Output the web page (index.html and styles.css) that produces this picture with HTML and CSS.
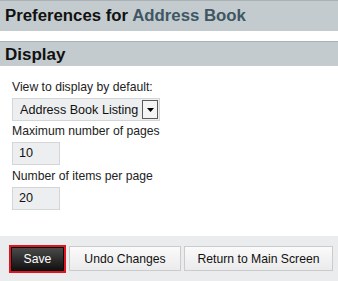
FILE: index.html
```html
<!DOCTYPE html>
<html lang="en">
<head>
    <meta charset="UTF-8">
    <title>Preferences for Address Book</title>
    <link rel="stylesheet" href="styles.css">
</head>
<body>
    <div class="page-title">
        <h1>Preferences for <span class="app-name">Address Book</span></h1>
    </div>

    <div class="section">
        <h2 class="section__title">Display</h2>
        <div class="section__body">
            <label class="field-label">View to display by default:</label>
            <div class="select">
                <span class="select__value">Address Book Listing</span>
                <span class="select__arrow">
                    <svg width="7" height="4" viewBox="0 0 7 4"><polygon points="0,0 7,0 3.5,4" fill="#000"/></svg>
                </span>
            </div>
            <label class="field-label">Maximum number of pages</label>
            <div class="text-input">10</div>
            <label class="field-label">Number of items per page</label>
            <div class="text-input">20</div>
        </div>
    </div>

    <div class="actions">
        <div class="btn-focus">
            <button class="btn btn--primary">Save</button>
        </div>
        <button class="btn btn--undo">Undo Changes</button>
        <button class="btn btn--return">Return to Main Screen</button>
    </div>
</body>
</html>
```

FILE: styles.css
```css
body {
    margin: 0;
    padding: 0;
    width: 338px;
    height: 281px;
    overflow: hidden;
    background: #fff;
    font-family: "Liberation Sans", Arial, sans-serif;
    color: #222;
    display: flex;
    flex-direction: column;
}

.page-title {
    height: 30px;
    border-top: 1px solid #a9b1b4;
    background: #c3cbce;
    padding-left: 5px;
    display: flex;
    align-items: center;
    flex-shrink: 0;
}

.page-title h1 {
    margin: 0;
    font-size: 16.8px;
    font-weight: bold;
    color: #111;
}

.app-name {
    color: #3f5663;
}

.section {
    margin-top: 10px;
    flex: 1;
}

.section__title {
    margin: 0;
    height: 24px;
    border-top: 1px solid #a9b1b4;
    background: #c3cbce;
    padding-left: 5px;
    font-size: 17px;
    font-weight: bold;
    color: #111;
    line-height: 26px;
}

.section__body {
    padding: 14px 12px 0;
    display: flex;
    flex-direction: column;
    align-items: flex-start;
}

.field-label {
    font-size: 12.2px;
    color: #222;
    line-height: 15px;
    margin-bottom: 3px;
}

.select {
    width: 146px;
    height: 21px;
    border: 1px solid #d3d6d7;
    background: #eceeef;
    display: flex;
    align-items: center;
    justify-content: space-between;
    margin-bottom: 3px;
}

.select__value {
    font-size: 12.6px;
    padding-left: 7px;
    color: #111;
    white-space: nowrap;
}

.select__arrow {
    width: 14px;
    height: 17px;
    border: 1px solid #5a5a5a;
    background: #f4f4f4;
    margin-right: 1px;
    display: flex;
    align-items: center;
    justify-content: center;
    flex-shrink: 0;
}

.text-input {
    width: 40px;
    height: 21px;
    border: 1px solid #d3d6d7;
    background: #eceeef;
    font-size: 12.6px;
    line-height: 21px;
    padding-left: 6px;
    margin-bottom: 4px;
    color: #111;
}

.actions {
    height: 45px;
    background: #eaeced;
    display: flex;
    align-items: center;
    padding-left: 9px;
    gap: 3px;
    flex-shrink: 0;
}

.btn {
    height: 25px;
    border: 1px solid #c9cbcc;
    background: linear-gradient(#fafafa, #ebebeb);
    font-family: "Liberation Sans", Arial, sans-serif;
    font-size: 12.2px;
    color: #111;
    padding: 0;
    white-space: nowrap;
    flex-shrink: 0;
    cursor: pointer;
}

.btn--undo {
    width: 112px;
}

.btn--return {
    width: 149px;
}

.btn-focus {
    border: 2px solid #e3141f;
    display: flex;
    flex-shrink: 0;
}

.btn--primary {
    width: 53px;
    height: 24px;
    border: 1px solid #000;
    background: linear-gradient(#4a4a4a, #111);
    color: #fff;
}
```
